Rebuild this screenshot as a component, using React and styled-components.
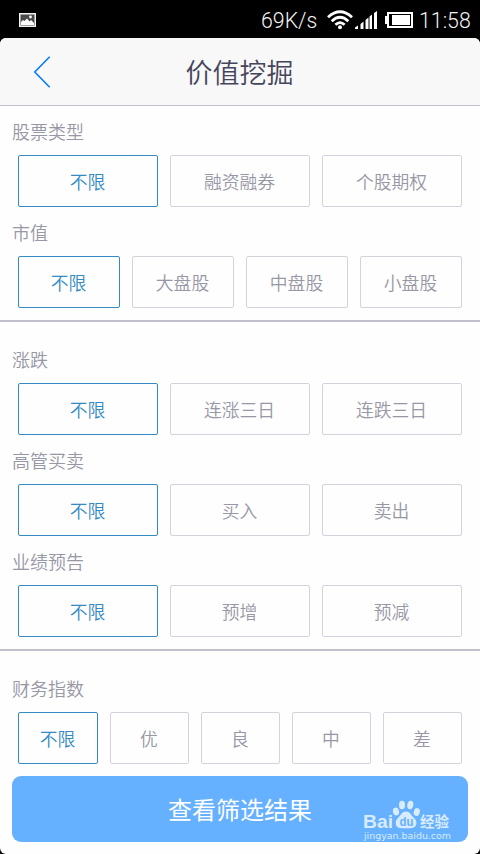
import { useState } from "react";
import styled, { createGlobalStyle } from "styled-components";

const GlobalStyle = createGlobalStyle`
    * {
        box-sizing: border-box;
    }

    body {
        margin: 0;
        background-color: #000;
        font-family: Roboto, "Noto Sans CJK SC", sans-serif;
    }
`;

const Phone = styled.div`
    width: 480px;
    height: 854px;
    display: flex;
    flex-direction: column;
    background-color: #000;
    overflow: hidden;
`;

const StatusBar = styled.div`
    height: 38px;
    flex: none;
    display: flex;
    align-items: center;
    justify-content: space-between;
    padding: 1px 9px 0 19px;
    color: #f2f2f2;
`;

const StatusRight = styled.div`
    display: flex;
    align-items: center;
`;

const StatusText = styled.span`
    padding-top: 2px;
    font-size: 21.3px;
    line-height: 26px;
    font-weight: 350;
    width: ${(props) => props.$width}px;
    margin-right: ${(props) => props.$gap || 0}px;
    white-space: nowrap;
`;

const SignalGap = styled.span`
    display: flex;
    margin: 0 8px 0 2px;
`;

const TimeGap = styled.span`
    display: flex;
    margin-left: 6px;
`;

const Screen = styled.div`
    flex: 1;
    display: flex;
    flex-direction: column;
    background-color: #fefefe;
    border-radius: 6px;
    overflow: hidden;
`;

const Header = styled.header`
    height: 68px;
    flex: none;
    display: grid;
    grid-template-columns: 84px 1fr 84px;
    align-items: center;
    background-color: #f8f8f8;
    border-bottom: 1px solid #c2c2cc;
`;

const BackButton = styled.button`
    display: flex;
    padding: 0 0 0 33px;
    border: none;
    background: none;
`;

const Title = styled.h1`
    margin: 0;
    padding-right: 1px;
    color: #45455c;
    font-family: "Noto Sans CJK SC", sans-serif;
    font-size: 27px;
    font-weight: 350;
    line-height: 40px;
    text-align: center;
`;

const Section = styled.section`
    padding: ${(props) => (props.$first ? 0 : 12)}px 0 ${(props) => (props.$last ? 0 : 12)}px;
    border-bottom: ${(props) => (props.$last ? "none" : "2px solid #c1c1cd")};
`;

const Label = styled.h2`
    height: 49px;
    margin: 0;
    padding: 0 12px;
    color: #9797a5;
    font-family: "Noto Sans CJK SC", sans-serif;
    font-size: 18px;
    font-weight: 350;
    line-height: 50px;
`;

const Options = styled.div`
    display: grid;
    grid-template-columns: ${(props) => (props.$count === 5 ? "80px repeat(4, 79px)" : `repeat(${props.$count}, 1fr)`)};
    gap: 12px;
    padding: 0 18px;
`;

const Option = styled.button`
    height: 52px;
    padding: 0 1px 0 0;
    border: 1px solid ${(props) => (props.$active ? "#348bc4" : "#d3d3de")};
    border-radius: 2px;
    background-color: #fefefe;
    color: ${(props) => (props.$active ? "#348bc4" : "#9797a5")};
    font-family: "Noto Sans CJK SC", sans-serif;
    font-size: 17.8px;
    font-weight: 350;
    line-height: 50px;
`;

const Footer = styled.footer`
    position: relative;
    padding: 12px;
`;

const SubmitButton = styled.button`
    width: 100%;
    height: 66px;
    display: block;
    padding: 0;
    border: none;
    border-radius: 9px;
    background-color: #66b1ff;
    color: #fff;
    font-family: "Noto Sans CJK SC", sans-serif;
    font-size: 24px;
    font-weight: 400;
    line-height: 66px;
`;

const Watermark = styled.svg`
    position: absolute;
    right: 25px;
    bottom: 10px;
    pointer-events: none;
`;

const sections = [
  [
    { label: "股票类型", options: ["不限", "融资融券", "个股期权"] },
    { label: "市值", options: ["不限", "大盘股", "中盘股", "小盘股"] },
  ],
  [
    { label: "涨跌", options: ["不限", "连涨三日", "连跌三日"] },
    { label: "高管买卖", options: ["不限", "买入", "卖出"] },
    { label: "业绩预告", options: ["不限", "预增", "预减"] },
  ],
  [{ label: "财务指数", options: ["不限", "优", "良", "中", "差"] }],
];

const PictureIcon = () => (
  <svg width="17" height="14" viewBox="0 0 17 14">
    <rect width="17" height="14" fill="#f2f2f2" />
    <rect x="1.5" y="1.5" width="14" height="11" fill="#4a4a4a" />
    <path d="M2 12V9l2-2 1.5 1L8 5.5l2.5 3L12 7l3 3v2z" fill="#fff" />
    <circle cx="11.5" cy="4" r="1.4" fill="#fff" />
  </svg>
);

const WifiIcon = () => (
  <svg width="26" height="20" viewBox="0 0 26 20" fill="none" stroke="#fff" strokeWidth="2.8">
    <path d="M1 7.2Q13-3.7 25 7.2" />
    <path d="M4.7 11.2Q13 3.4 21.3 11.2" />
    <path d="M8.4 14.8Q13 10.4 17.6 14.8" />
    <circle cx="13" cy="17.2" r="2" fill="#fff" stroke="none" />
  </svg>
);

const SignalIcon = () => (
  <svg width="22" height="18" viewBox="0 0 22 18" fill="#fff">
    <path d="M0 18v-1.5l3-2V18zM5.500 18v-5l3-2.500V18zM10.500 18V9l3-2.500V18zM14.500 18V5.500L17 3.500V18zM19 18V2L22 0v18z" />
  </svg>
);

const BatteryIcon = () => (
  <svg width="28" height="16" viewBox="0 0 28 16">
    <path d="M0 4h2V0h26v16H2v-4H0z" fill="#fff" />
    <rect x="4" y="2" width="22" height="12" fill="#000" />
    <rect x="7" y="3" width="18" height="10" fill="#fff" />
  </svg>
);

const BackIcon = () => (
  <svg width="18" height="32" viewBox="0 0 18 32" fill="none" stroke="#0a7cf5" strokeWidth="1.6">
    <path d="M16.7 .8L1.8 16L16.7 31.2" />
  </svg>
);

const BaiduWatermark = () => (
  <Watermark width="92" height="46" viewBox="0 0 92 46" fill="#d9ebff">
    <text x="0" y="29.5" fontFamily="Liberation Sans, sans-serif" fontSize="18.5" fontWeight="700" textLength="30" lengthAdjust="spacingAndGlyphs">Bai</text>
    <ellipse cx="33" cy="13.5" rx="3" ry="4" transform="rotate(-15 33 13.5)" />
    <ellipse cx="39" cy="7" rx="3" ry="4.2" />
    <ellipse cx="47.3" cy="7" rx="3" ry="4.2" transform="rotate(10 47.3 7)" />
    <ellipse cx="53.8" cy="14" rx="3" ry="4" transform="rotate(15 53.8 14)" />
    <path d="M43 13.5c4 0 5 3.500 8 6.500 4 3 3 9.500-2 10-4 .4-8 .4-12 0-5-.5-5.500-7-2-10 3-3 4-6.500 8-6.500z" />
    <text x="36.5" y="28" fill="#66b1ff" fontFamily="Liberation Sans, sans-serif" fontSize="13" fontWeight="700" textLength="14" lengthAdjust="spacingAndGlyphs">du</text>
    <text x="57" y="28.5" fontFamily="Noto Sans CJK SC, sans-serif" fontSize="14.5" fontWeight="700" textLength="29">经验</text>
    <text x="1" y="41" fontFamily="DejaVu Sans, sans-serif" fontSize="9.2" textLength="87" lengthAdjust="spacingAndGlyphs">jingyan.baidu.com</text>
  </Watermark>
);

const FilterGroup = ({ label, options }) => {
  const [selected, setSelected] = useState(options[0]);

  return (
    <div>
      <Label>{label}</Label>
      <Options $count={options.length}>
        {options.map((option) => (
          <Option key={option} $active={option === selected} onClick={() => setSelected(option)}>
            {option}
          </Option>
        ))}
      </Options>
    </div>
  );
};

const App = () => {
  return (
    <Phone lang="zh-CN">
      <GlobalStyle />
      <StatusBar>
        <PictureIcon />
        <StatusRight>
          <StatusText $width={57} $gap={9}>69K/s</StatusText>
          <WifiIcon />
          <SignalGap><SignalIcon /></SignalGap>
          <BatteryIcon />
          <TimeGap><StatusText $width={52}>11:58</StatusText></TimeGap>
        </StatusRight>
      </StatusBar>
      <Screen>
        <Header>
          <BackButton aria-label="返回"><BackIcon /></BackButton>
          <Title>价值挖掘</Title>
        </Header>
        {sections.map((groups, index) => (
          <Section key={index} $first={index === 0} $last={index === sections.length - 1}>
            {groups.map((group) => (
              <FilterGroup key={group.label} {...group} />
            ))}
          </Section>
        ))}
        <Footer>
          <SubmitButton>查看筛选结果</SubmitButton>
          <BaiduWatermark />
        </Footer>
      </Screen>
    </Phone>
  );
};

export default App;
